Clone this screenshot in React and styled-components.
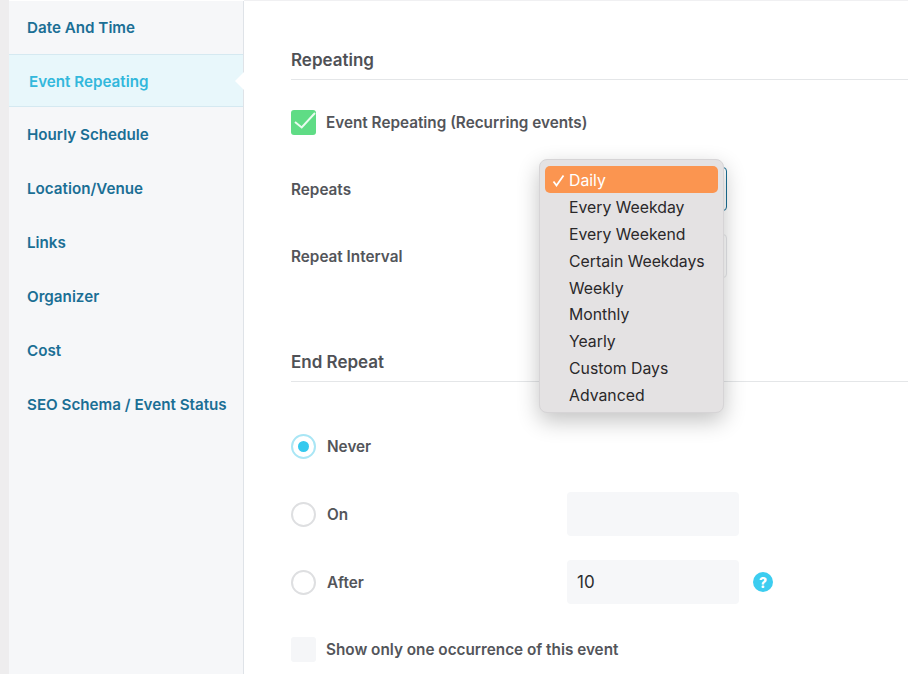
import styled, { createGlobalStyle } from "styled-components";

const GlobalStyle = createGlobalStyle`
  html, body {
    margin: 0;
    padding: 0;
    background: #fff;
    font-family: Inter, "Liberation Sans", sans-serif;
  }
`;

const Page = styled.div`
  position: relative;
  width: 908px;
  height: 674px;
  display: flex;
  overflow: hidden;
  background: #fff;
`;

const Gutter = styled.div`
  width: 9px;
  flex-shrink: 0;
  background: #eeedee;
`;

const Sidebar = styled.nav`
  width: 234px;
  flex-shrink: 0;
  margin-top: 1px;
  background: #f6f7f9;
  border-right: 1px solid #dfe3e8;
`;

const NavItem = styled.div`
  position: relative;
  height: ${(p) => (p.$active || p.$first ? "53px" : "53.9px")};
  box-sizing: border-box;
  display: flex;
  align-items: center;
  padding-left: ${(p) => (p.$active ? "20px" : "18px")};
  padding-top: ${(p) => (p.$first ? "0" : "2px")};
  padding-bottom: ${(p) => (p.$first ? "1px" : "0")};
  font-size: 15.2px;
  font-weight: 600;
  color: ${(p) => (p.$active ? "#33b8dc" : "#1b6f95")};
  background: ${(p) => (p.$active ? "#e8f7fb" : "transparent")};
  ${(p) => p.$active && "border-top: 1px solid #d5e9f1; border-bottom: 1px solid #d5e9f1;"}

  ${(p) =>
    p.$active &&
    `&::after {
      content: "";
      position: absolute;
      right: -1px;
      top: 17px;
      width: 0;
      height: 0;
      border-top: 9px solid transparent;
      border-bottom: 9px solid transparent;
      border-right: 9px solid #fff;
    }`}
`;

const Main = styled.main`
  flex: 1;
  padding: 47px 0 0 47px;
  border-top: 1px solid #f0f0f2;
`;

const Heading = styled.h3`
  margin: ${(p) => p.$top || 0}px 0 0;
  padding-bottom: 8px;
  height: 23px;
  line-height: 25px;
  font-size: 17px;
  font-weight: 600;
  color: #4f5156;
  border-bottom: 1px solid #e4e6e8;
`;

const CheckRow = styled.div`
  display: flex;
  align-items: center;
  gap: 10px;
  height: 25px;
  margin-top: ${(p) => p.$top}px;
`;

const CheckBox = styled.span`
  width: 25px;
  height: 25px;
  flex-shrink: 0;
  border-radius: 3px;
  background: ${(p) => (p.$checked ? "#5fdc85" : "#f5f6f8")};
  display: flex;
`;

const Label = styled.span`
  font-size: 15.3px;
  font-weight: 600;
  color: #53555a;
`;

const FieldRow = styled.div`
  display: grid;
  grid-template-columns: 248px 188px;
  align-items: center;
  height: 44px;
  margin-top: ${(p) => p.$top}px;
`;

const SelectBox = styled.div`
  height: 44px;
  box-sizing: border-box;
  border-radius: 4px;
  background: #fff;
  border: 1px solid ${(p) => (p.$focused ? "#1b6f95" : "#e6e7ea")};
`;

const OptionRow = styled.div`
  display: grid;
  grid-template-columns: 276px 172px 34px;
  align-items: center;
  height: 44px;
  margin-top: ${(p) => p.$top}px;
`;

const RadioLabel = styled.label`
  display: flex;
  align-items: center;
  gap: 11px;
`;

const Radio = styled.span`
  width: 25px;
  height: 25px;
  box-sizing: border-box;
  border-radius: 50%;
  border: 2px solid ${(p) => (p.$checked ? "#a9e6f5" : "#dedfe1")};
  display: flex;
  align-items: center;
  justify-content: center;

  &::after {
    content: "";
    display: ${(p) => (p.$checked ? "block" : "none")};
    width: 11px;
    height: 11px;
    border-radius: 50%;
    background: #35c9ee;
  }
`;

const TextInput = styled.div`
  height: 44px;
  box-sizing: border-box;
  padding-left: 10px;
  display: flex;
  align-items: center;
  border-radius: 4px;
  background: #f6f7f9;
  font-size: 17px;
  color: #2c2d30;
`;

const HelpBadge = styled.span`
  justify-self: end;
  width: 20px;
  height: 20px;
  border-radius: 50%;
  background: #3ccdf0;
  color: #fff;
  font-size: 14px;
  font-weight: 800;
  display: flex;
  align-items: center;
  justify-content: center;
`;

const Menu = styled.ul`
  position: absolute;
  left: 539px;
  top: 159px;
  width: 185px;
  height: 254px;
  box-sizing: border-box;
  margin: 0;
  padding: 6px 5px;
  list-style: none;
  border-radius: 8px;
  background: #e4e2e3;
  border: 1px solid #d6d4d6;
  box-shadow: 0 8px 22px rgba(0, 0, 0, 0.24);
`;

const MenuItem = styled.li`
  height: 26.9px;
  box-sizing: border-box;
  display: flex;
  align-items: center;
  padding: 2px 0 0 5px;
  border-radius: 5px;
  font-size: 15.8px;
  color: ${(p) => (p.$selected ? "#fff" : "#2a282a")};
  background: ${(p) => (p.$selected ? "#fb9550" : "transparent")};
`;

const MenuTick = styled.span`
  width: 19px;
  flex-shrink: 0;
  display: flex;
  align-items: center;
  padding-left: 2px;
  box-sizing: border-box;
`;

const navItems = [
  "Date And Time",
  "Event Repeating",
  "Hourly Schedule",
  "Location/Venue",
  "Links",
  "Organizer",
  "Cost",
  "SEO Schema / Event Status",
];

const repeatOptions = [
  "Daily",
  "Every Weekday",
  "Every Weekend",
  "Certain Weekdays",
  "Weekly",
  "Monthly",
  "Yearly",
  "Custom Days",
  "Advanced",
];

const App = () => {
  return (
    <Page>
      <GlobalStyle />
      <Gutter />
      <Sidebar>
        {navItems.map((item, i) => (
          <NavItem key={item} $active={i === 1} $first={i === 0}>
            {item}
          </NavItem>
        ))}
      </Sidebar>

      <Main>
        <Heading>Repeating</Heading>

        <CheckRow $top={30}>
          <CheckBox $checked>
            <svg width="25" height="25" viewBox="0 0 25 25" fill="none">
              <path d="M4 12l6.7 5.5L24 3" stroke="#eafbf0" strokeWidth="2" />
            </svg>
          </CheckBox>
          <Label>Event Repeating (Recurring events)</Label>
        </CheckRow>

        <FieldRow $top={32}>
          <Label>Repeats</Label>
          <SelectBox $focused />
        </FieldRow>
        <FieldRow $top={23}>
          <Label>Repeat Interval</Label>
          <SelectBox />
        </FieldRow>

        <Heading $top={72}>End Repeat</Heading>

        <OptionRow $top={42}>
          <RadioLabel>
            <Radio $checked />
            <Label>Never</Label>
          </RadioLabel>
        </OptionRow>
        <OptionRow $top={24}>
          <RadioLabel>
            <Radio />
            <Label>On</Label>
          </RadioLabel>
          <TextInput />
        </OptionRow>
        <OptionRow $top={24}>
          <RadioLabel>
            <Radio />
            <Label>After</Label>
          </RadioLabel>
          <TextInput>10</TextInput>
          <HelpBadge>?</HelpBadge>
        </OptionRow>

        <CheckRow $top={33}>
          <CheckBox />
          <Label>Show only one occurrence of this event</Label>
        </CheckRow>
      </Main>

      <Menu>
        {repeatOptions.map((option, i) => (
          <MenuItem key={option} $selected={i === 0}>
            <MenuTick>
              {i === 0 && (
                <svg width="13" height="13" viewBox="0 0 13 13" fill="none">
                  <path d="M1.5 7.5l3 4L11.5 1.5" stroke="#fff" strokeWidth="1.8" />
                </svg>
              )}
            </MenuTick>
            {option}
          </MenuItem>
        ))}
      </Menu>
    </Page>
  );
};

export default App;
